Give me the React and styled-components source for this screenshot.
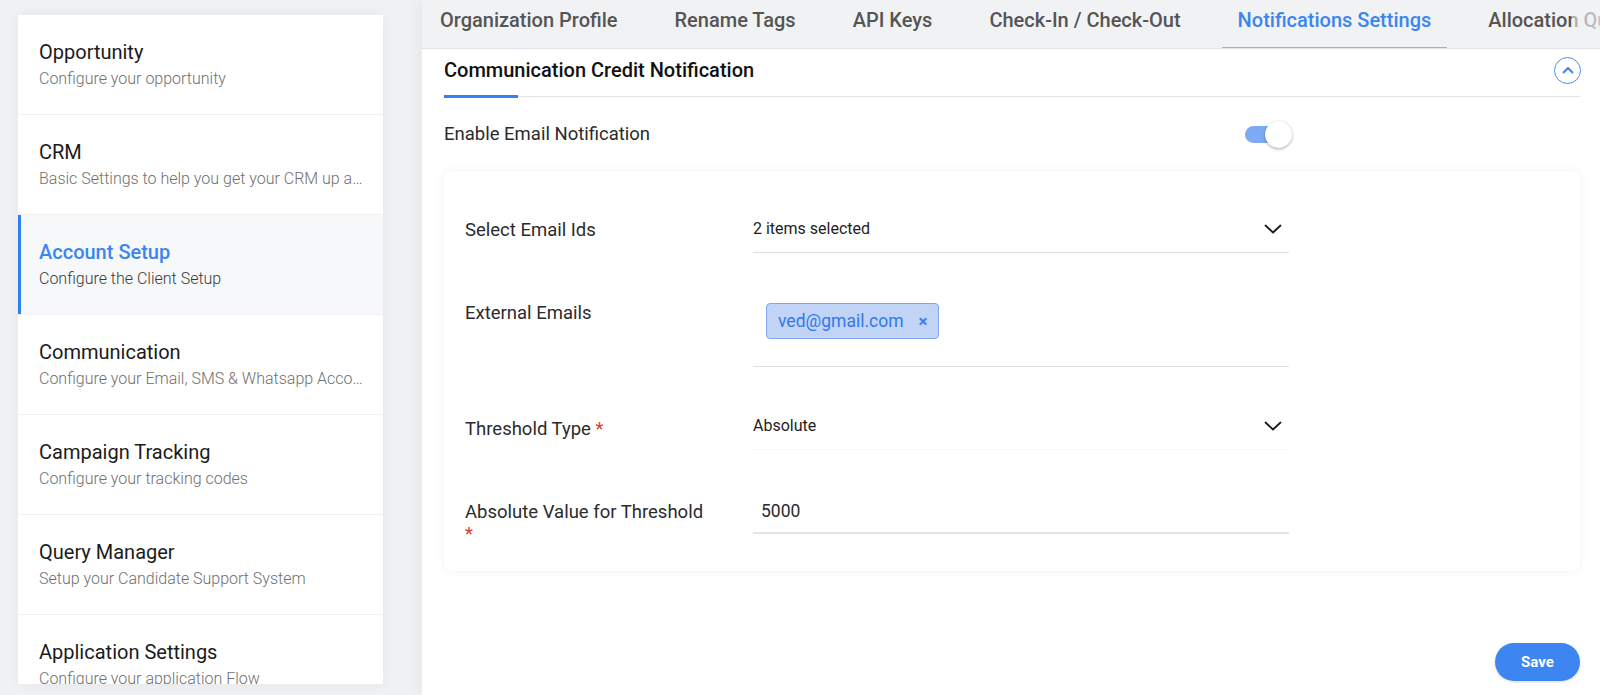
import React from "react";
import styled, { createGlobalStyle } from "styled-components";

const Global = createGlobalStyle`
  html, body { margin: 0; padding: 0; }
  body {
    background: #f0f1f3;
    font-family: Roboto, "Noto Sans", "Liberation Sans", sans-serif;
    color: #222;
  }
  * { box-sizing: border-box; }
`;

const Page = styled.div`
  display: flex;
  height: 695px;
  overflow: hidden;
`;

const SidebarWrap = styled.div`
  padding: 15px 0 11px 18px;
  flex-shrink: 0;
`;

const Sidebar = styled.nav`
  width: 365px;
  height: 669px;
  background: #fff;
  box-shadow: 0 0 12px rgba(0, 0, 0, 0.05);
  overflow: hidden;
  display: flex;
  flex-direction: column;
`;

const Item = styled.div`
  flex-shrink: 0;
  height: 100px;
  padding: 25px 18px 0 21px;
  border-bottom: 1px solid #f1f1f3;
  background: ${(p) => (p.$active ? "#f7f8fa" : "#fff")};
  box-shadow: ${(p) => (p.$active ? "inset 3px 0 0 #2f80f5" : "none")};
`;

const ItemTitle = styled.div`
  font-size: 20px;
  line-height: 24px;
  font-weight: ${(p) => (p.$active ? 500 : 400)};
  color: ${(p) => (p.$active ? "#3a86f0" : "#1b1b1b")};
`;

const ItemSub = styled.div`
  margin-top: 5px;
  font-size: 16px;
  line-height: 20px;
  font-weight: 300;
  color: ${(p) => (p.$active ? "#3a3a3a" : "#6f6f6f")};
  white-space: nowrap;
  overflow: hidden;
  text-overflow: ellipsis;
`;

const Main = styled.div`
  flex: 1;
  min-width: 0;
  margin-left: 39px;
  display: flex;
  flex-direction: column;
  box-shadow: -6px 0 12px rgba(0, 0, 0, 0.035);
`;

const TabBar = styled.div`
  position: relative;
  height: 49px;
  flex-shrink: 0;
  display: flex;
  gap: 25px;
  padding-left: 2px;
  border-bottom: 1px solid #e2e4e8;
  background: #f1f2f4;
  overflow: hidden;
  &::after {
    content: "";
    position: absolute;
    right: 0;
    top: 0;
    width: 28px;
    height: 100%;
    background: linear-gradient(
      to right,
      rgba(241, 242, 244, 0.55),
      rgba(241, 242, 244, 0.7)
    );
  }
`;

const Tab = styled.div`
  flex-shrink: 0;
  height: 49px;
  padding: 8px 16px 0;
  font-size: 20px;
  line-height: 24px;
  font-weight: 500;
  white-space: nowrap;
  color: ${(p) => (p.$active ? "#3a86f0" : "#555")};
  border-bottom: 2px solid ${(p) => (p.$active ? "#8db2f4" : "transparent")};
`;

const Panel = styled.div`
  flex: 1;
  background: #fff;
  padding: 0 20px 0 22px;
  display: flex;
  flex-direction: column;
`;

const SectionHeader = styled.div`
  position: relative;
  height: 48px;
  padding-bottom: 5px;
  display: flex;
  align-items: center;
  justify-content: space-between;
  border-bottom: 1px solid #e3e4e6;
  &::after {
    content: "";
    position: absolute;
    left: 0;
    bottom: -2px;
    width: 74px;
    height: 3px;
    background: #3a7ff0;
  }
`;

const SectionTitle = styled.div`
  font-size: 20px;
  line-height: 24px;
  font-weight: 500;
  color: #111;
`;

const CircleButton = styled.div`
  width: 27px;
  height: 27px;
  border-radius: 50%;
  border: 1px solid #4a8ef2;
  display: flex;
  align-items: center;
  justify-content: center;
  margin-right: -1px;
`;

const EnableRow = styled.div`
  width: 850px;
  height: 74px;
  display: flex;
  align-items: center;
  justify-content: space-between;
`;

const EnableLabel = styled.div`
  font-size: 18.5px;
  color: #2b2b2b;
`;

const Toggle = styled.div`
  position: relative;
  width: 49px;
  height: 27px;
  display: flex;
  align-items: center;
`;

const Track = styled.div`
  width: 40px;
  height: 17px;
  border-radius: 9px;
  background: #7ea9f4;
`;

const Knob = styled.div`
  position: absolute;
  right: 2px;
  top: 0;
  width: 27px;
  height: 27px;
  border-radius: 50%;
  background: #fff;
  box-shadow: 0 1px 3px rgba(0, 0, 0, 0.35);
`;

const Card = styled.div`
  background: #fff;
  border-radius: 8px;
  box-shadow: 0 0 10px rgba(0, 0, 0, 0.06);
  padding: 34px 0 26px 21px;
  display: flex;
  flex-direction: column;
`;

const Row = styled.div`
  display: grid;
  grid-template-columns: 288px 536px;
  align-items: start;
  margin-top: ${(p) => p.$top || 0}px;
`;

const Label = styled.div`
  max-width: 242px;
  padding-top: ${(p) => p.$pt || 0}px;
  font-size: 18.5px;
  line-height: 22px;
  color: #2b2b2b;
`;

const Star = styled.span`
  color: #e53935;
`;

const SelectField = styled.div`
  height: ${(p) => p.$h || 48}px;
  display: flex;
  align-items: center;
  justify-content: space-between;
  padding-right: 7px;
  border-bottom: 1px solid ${(p) => (p.$faint ? "#f7f7f7" : "#dedede")};
  font-size: 16px;
  color: #1e1e1e;
`;

const ChipField = styled.div`
  height: 72px;
  padding: 8px 0 0 13px;
  border-bottom: 1px solid #dedede;
`;

const Chip = styled.div`
  display: inline-flex;
  align-items: center;
  height: 36px;
  padding: 0 10px 0 11px;
  border: 1px solid #7fa7ee;
  border-radius: 4px;
  background: #c2d4f5;
  color: #3278ec;
  font-size: 17.5px;
`;

const ChipClose = styled.span`
  margin-left: 15px;
  font-size: 17px;
  font-weight: 700;
  color: #3a80f0;
`;

const InputField = styled.div`
  height: 44px;
  display: flex;
  align-items: center;
  padding-left: 8px;
  border-bottom: 2px solid #e4e4e4;
  font-size: 17.5px;
  color: #2b2b2b;
`;

const Footer = styled.div`
  display: flex;
  justify-content: flex-end;
  margin-top: 72px;
`;

const SaveButton = styled.button`
  width: 85px;
  height: 38px;
  border: none;
  border-radius: 19px;
  background: #3d85f0;
  color: #fff;
  font-family: inherit;
  font-size: 15px;
  font-weight: 700;
  box-shadow: 0 1px 3px rgba(0, 0, 0, 0.15);
`;

const ChevronDown = () => (
  <svg width="18" height="10" viewBox="0 0 18 10" fill="none">
    <polyline
      points="1.5,1.5 9,8.5 16.5,1.5"
      stroke="#1a1a1a"
      strokeWidth="1.8"
      strokeLinecap="round"
      strokeLinejoin="round"
    />
  </svg>
);

const ChevronUp = () => (
  <svg width="12" height="8" viewBox="0 0 12 8" fill="none">
    <polyline
      points="1.5,6.5 6,2 10.5,6.5"
      stroke="#3a80f0"
      strokeWidth="1.8"
      strokeLinecap="round"
      strokeLinejoin="round"
    />
  </svg>
);

const items = [
  { t: "Opportunity", s: "Configure your opportunity" },
  { t: "CRM", s: "Basic Settings to help you get your CRM up and running" },
  { t: "Account Setup", s: "Configure the Client Setup", active: true },
  { t: "Communication", s: "Configure your Email, SMS & Whatsapp Accounts" },
  { t: "Campaign Tracking", s: "Configure your tracking codes" },
  { t: "Query Manager", s: "Setup your Candidate Support System" },
  { t: "Application Settings", s: "Configure your application Flow" },
];

const tabs = [
  "Organization Profile",
  "Rename Tags",
  "API Keys",
  "Check-In / Check-Out",
  "Notifications Settings",
  "Allocation Queue",
];

export default function App() {
  return (
    <>
      <Global />
      <Page>
        <SidebarWrap>
          <Sidebar>
            {items.map((it) => (
              <Item key={it.t} $active={it.active}>
                <ItemTitle $active={it.active}>{it.t}</ItemTitle>
                <ItemSub $active={it.active}>{it.s}</ItemSub>
              </Item>
            ))}
          </Sidebar>
        </SidebarWrap>
        <Main>
          <TabBar>
            {tabs.map((t) => (
              <Tab key={t} $active={t === "Notifications Settings"}>
                {t}
              </Tab>
            ))}
          </TabBar>
          <Panel>
            <SectionHeader>
              <SectionTitle>Communication Credit Notification</SectionTitle>
              <CircleButton>
                <ChevronUp />
              </CircleButton>
            </SectionHeader>
            <EnableRow>
              <EnableLabel>Enable Email Notification</EnableLabel>
              <Toggle>
                <Track />
                <Knob />
              </Toggle>
            </EnableRow>
            <Card>
              <Row>
                <Label $pt={14}>Select Email Ids</Label>
                <SelectField>
                  <span>2 items selected</span>
                  <ChevronDown />
                </SelectField>
              </Row>
              <Row $top={42}>
                <Label $pt={7}>External Emails</Label>
                <ChipField>
                  <Chip>
                    ved@gmail.com
                    <ChipClose>×</ChipClose>
                  </Chip>
                </ChipField>
              </Row>
              <Row $top={35}>
                <Label $pt={16}>
                  Threshold Type <Star>*</Star>
                </Label>
                <SelectField $faint>
                  <span>Absolute</span>
                  <ChevronDown />
                </SelectField>
              </Row>
              <Row $top={40}>
                <Label $pt={11}>
                  Absolute Value for Threshold <Star>*</Star>
                </Label>
                <InputField>5000</InputField>
              </Row>
            </Card>
            <Footer>
              <SaveButton>Save</SaveButton>
            </Footer>
          </Panel>
        </Main>
      </Page>
    </>
  );
}
